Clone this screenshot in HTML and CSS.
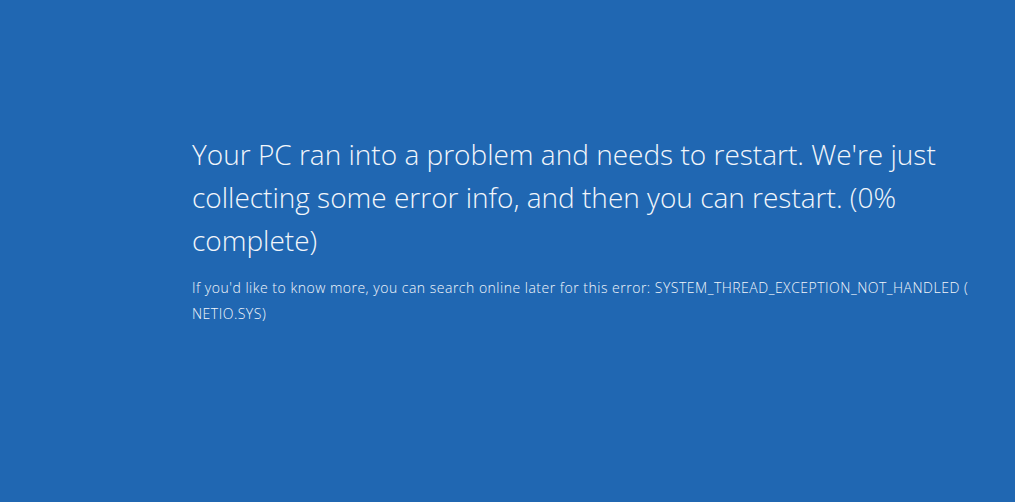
FILE: index.html
```html
<!DOCTYPE html>
<html lang="en">
<head>
  <meta charset="UTF-8">
  <title>Your PC ran into a problem</title>
  <link rel="stylesheet" href="styles.css">
</head>
<body>
  <main class="crash">
    <p class="crash-title">Your PC ran into a problem and needs to restart. We're just collecting some error info, and then you can restart. (0% complete)</p>
    <p class="crash-info">If you'd like to know more, you can search online later for this error: SYSTEM_THREAD_EXCEPTION_NOT_HANDLED ( NETIO.SYS)</p>
  </main>
</body>
</html>
```

FILE: styles.css
```css
html, body {
  margin: 0;
  height: 100%;
}
body {
  background-color: #2067b2;
  color: #f2f6fb;
  font-family: 'Open Sans', 'Noto Sans', sans-serif;
}
.crash {
  padding: 133px 40px 0 192px;
  max-width: 785px;
}
.crash-title {
  margin: 0 0 13px;
  font-size: 28px;
  font-weight: 300;
  line-height: 43px;
}
.crash-info {
  margin: 0;
  font-size: 14px;
  letter-spacing: 0.5px;
  font-weight: 300;
  line-height: 26px;
}
```
